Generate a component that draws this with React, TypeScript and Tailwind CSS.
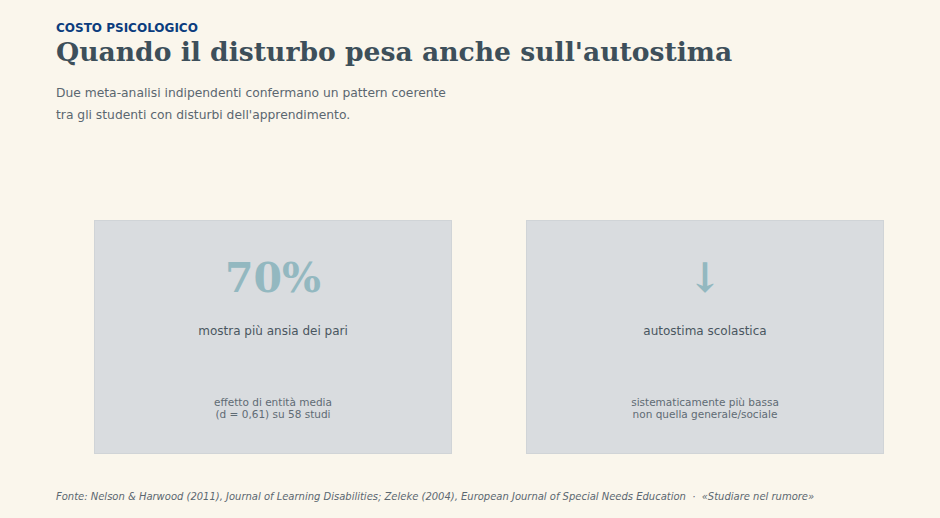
import React from 'react';

const cards = [
  {
    big: '70%',
    label: 'mostra più ansia dei pari',
    note: ['effetto di entità media', '(d = 0,61) su 58 studi'],
  },
  {
    big: '↓',
    label: 'autostima scolastica',
    note: ['sistematicamente più bassa', 'non quella generale/sociale'],
  },
];

export default function App() {
  return (
    <div className="w-[940px] h-[518px] overflow-hidden bg-[#faf6ec] px-14 pt-[20px] font-['DejaVu_Sans',sans-serif] flex flex-col">
      {/* HEADER */}
      <div className="text-[12px] leading-4 font-bold text-[#0b3d7e]">COSTO PSICOLOGICO</div>
      <h1 className="font-['DejaVu_Serif',serif] font-bold text-[26.6px] leading-[32px] text-[#3d4f5a]">
        Quando il disturbo pesa anche sull'autostima
      </h1>
      <p className="mt-[14px] text-[12.3px] leading-[22px] text-[#5b6770]">
        Due meta-analisi indipendenti confermano un pattern coerente
        <br />
        tra gli studenti con disturbi dell'apprendimento.
      </p>

      {/* CARDS */}
      <div className="mt-[94px] ml-[38px] grid grid-cols-2 gap-[74px]">
        {cards.map((c) => (
          <div
            key={c.label}
            className="h-[234px] bg-[#d9dcdf] border border-[#d0d4d7] flex flex-col items-center text-center"
          >
            <div className="mt-[35px] h-[44px] font-['DejaVu_Serif',serif] font-bold text-[41px] leading-[44px] text-[#93b8c0]">
              {c.big}
            </div>
            <div className="mt-[23px] text-[12px] leading-4 text-[#4a5660]">{c.label}</div>
            <div className="mt-[57px] text-[10.5px] leading-3 text-[#5f6b74]">
              {c.note[0]}
              <br />
              {c.note[1]}
            </div>
          </div>
        ))}
      </div>

      {/* FOOTER */}
      <div className="mt-[35px] text-[11.1px] leading-4 italic text-[#5b6770] font-['DejaVu_Sans_Condensed','DejaVu_Sans',sans-serif]">
        Fonte: Nelson &amp; Harwood (2011), Journal of Learning Disabilities; Zeleke (2004), European Journal of Special Needs Education&nbsp; ·&nbsp; «Studiare nel rumore»
      </div>
    </div>
  );
}
